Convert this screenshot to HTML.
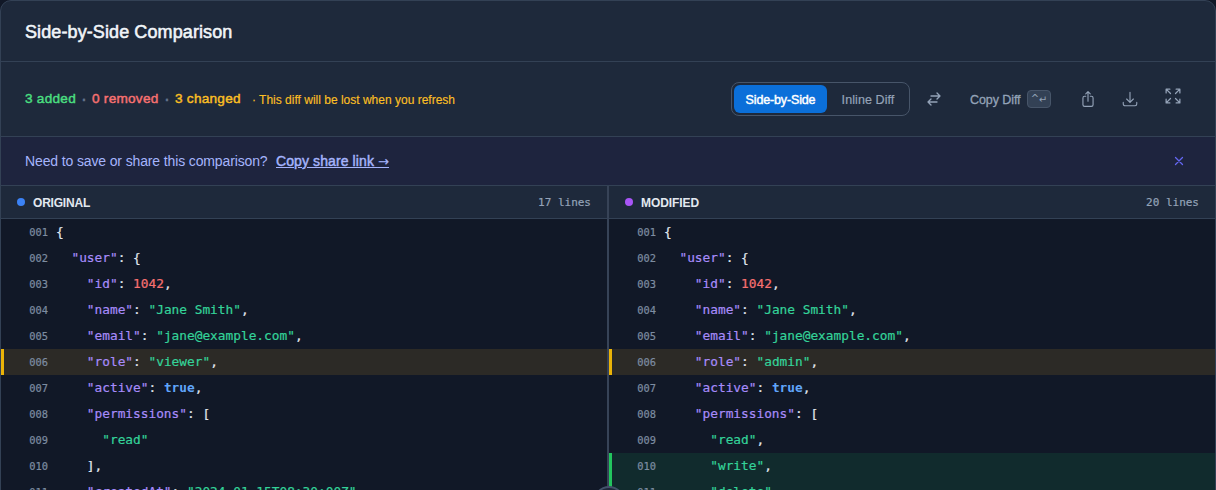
<!DOCTYPE html>
<html lang="en">
<head>
<meta charset="utf-8">
<title>Side-by-Side Comparison</title>
<style>
  * { box-sizing: border-box; margin: 0; padding: 0; }
  html, body { width: 1216px; height: 490px; overflow: hidden; background: #111827; }
  body { font-family: "Liberation Sans", sans-serif; color: #e2e8f0; -webkit-font-smoothing: antialiased; }
  .card { position: absolute; left: 0; top: 0; width: 1216px; height: 560px; background: #1e293b; border: 1px solid #334155; border-radius: 11px; overflow: hidden; }

  /* header */
  .head { position: absolute; left: 0; top: 0; width: 1214px; height: 61px; border-bottom: 1px solid #334155; }
  .head h1 { position: absolute; left: 24px; top: 19px; font-size: 18px; line-height: 24px; font-weight: 400; -webkit-text-stroke: 0.55px #f1f5f9; letter-spacing: 0.1px; color: #f1f5f9; white-space: nowrap; }

  /* toolbar */
  .bar { position: absolute; left: 0; top: 61px; width: 1214px; height: 75px; border-bottom: 1px solid #334155; }
  .stats { position: absolute; left: 24px; top: 27px; height: 20px; line-height: 20px; font-size: 13.6px; font-weight: 400; -webkit-text-stroke: 0.45px; letter-spacing: 0.26px; white-space: nowrap; }
  .stats span { position: absolute; top: 0; }
  .add { color: #4ade80; } .rem { color: #f87171; } .chg { color: #fbbf24; }
  .dot { color: #64748b; font-size: 14px; font-weight: 700; -webkit-text-stroke: 0.25px #64748b; margin-top: 1px; }
  .warn { color: #fbbf24; font-size: 12px; -webkit-text-stroke: 0.15px #fbbf24; letter-spacing: 0; margin-top: 1px; }

  .seg { position: absolute; left: 730px; top: 20px; width: 179px; height: 34px; border: 1px solid #475569; border-radius: 8px; }
  .seg .on { position: absolute; left: 2px; top: 2px; width: 93px; height: 28px; border-radius: 6px; background: #0b6fd9; color: #fff; font-size: 12.5px; font-weight: 400; -webkit-text-stroke: 0.45px #fff; letter-spacing: -0.15px; line-height: 28px; padding-top: 1px; text-align: center; }
  .seg .off { position: absolute; left: 97px; top: 2px; width: 78px; height: 28px; border-radius: 6px; color: #94a3b8; font-size: 12.5px; font-weight: 400; -webkit-text-stroke: 0.2px #94a3b8; letter-spacing: 0.08px; line-height: 28px; padding-top: 1px; text-align: center; }
  .ico { position: absolute; color: #94a3b8; }
  .ico svg { display: block; fill: none; stroke: currentColor; stroke-width: 1.5; stroke-linecap: round; stroke-linejoin: round; }
  .kbd span { position: relative; top: 1px; margin-left: -0.5px; }
  .copy { position: absolute; left: 969px; top: 28px; font-size: 12.5px; line-height: 20px; color: #94a3b8; -webkit-text-stroke: 0.3px #94a3b8; letter-spacing: -0.08px; white-space: nowrap; }
  .kbd { position: absolute; left: 1026px; top: 28px; width: 24px; height: 18px; border: 1px solid #475569; background: #334155; border-radius: 4px; color: #94a3b8; font-size: 10px; line-height: 16px; text-align: center; font-family: "DejaVu Sans", "Liberation Sans", sans-serif; }

  /* banner */
  .banner { position: absolute; left: 0; top: 136px; width: 1214px; height: 49px; background: #1e243e; border-bottom: 1px solid #334155; }
  .banner p { position: absolute; left: 24px; top: 14px; font-size: 14px; line-height: 20px; color: #a5b4fc; letter-spacing: -0.13px; white-space: nowrap; }
  .banner a { position: absolute; left: 251px; top: 0; color: #a5b4fc; font-weight: 400; -webkit-text-stroke: 0.45px #a5b4fc; letter-spacing: 0.1px; text-decoration: underline; }
  .banner .ar { font-family: "DejaVu Sans", "Liberation Sans", sans-serif; font-size: 13px; -webkit-text-stroke: 0.2px #a5b4fc; }
  .banner .x { position: absolute; left: 1171px; top: 17px; color: #6467f2; }

  /* panels */
  .pane { position: absolute; top: 185px; height: 380px; background: #111827; overflow: hidden; }
  .pane.l { left: 0; width: 606px; }
  .pane.r { left: 608px; width: 606px; }
  .split { position: absolute; left: 606px; top: 185px; width: 2px; height: 380px; background: #374357; }
  .knob { position: absolute; left: 592px; top: 485px; width: 32px; height: 32px; border-radius: 50%; background: #1e293b; border: 2px solid #43526a; }
  .ph { position: absolute; left: 0; top: 0; width: 100%; height: 33px; background: #1e293b; border-bottom: 1px solid #334155; }
  .ph i { position: absolute; left: 16px; top: 12px; width: 8px; height: 8px; border-radius: 50%; }
  .ph b { position: absolute; left: 32px; top: 7px; font-size: 12px; line-height: 20px; font-weight: 700; color: #e2e8f0; letter-spacing: -0.2px; }
  .ph em { position: absolute; right: 16px; top: 7px; font-style: normal; font-family: "DejaVu Sans Mono", "Liberation Mono", monospace; font-size: 11px; line-height: 20px; color: #94a3b8; -webkit-text-stroke: 0.2px #94a3b8; }
  .code { position: absolute; left: 0; top: 33px; width: 100%; font-family: "DejaVu Sans Mono", "Liberation Mono", monospace; font-size: 12.8px; -webkit-text-stroke: 0.2px; }
  .ln { position: relative; height: 26px; line-height: 26px; white-space: pre; border-left: 3px solid transparent; padding-left: 52px; color: #e2e8f0; }
  .ln u { position: absolute; left: 16px; top: 0; width: 28px; text-align: right; text-decoration: none; font-size: 10.4px; color: #7d8ca1; }
  .ln.c { background: #2c2a26; border-left-color: #eab308; }
  .ln.a { background: #112b2d; border-left-color: #22c55e; }
  .k { color: #a78bfa; } .s { color: #34d399; } .n { color: #f87171; } .t { color: #60a5fa; font-weight: 700; -webkit-text-stroke: 0; }
</style>
</head>
<body>
<div class="card">
  <div class="head"><h1>Side-by-Side Comparison</h1></div>

  <div class="bar">
    <div class="stats">
      <span class="add" style="left:0">3 added</span>
      <span class="dot" style="left:57px">·</span>
      <span class="rem" style="left:67px">0 removed</span>
      <span class="dot" style="left:140px">·</span>
      <span class="chg" style="left:150px">3 changed</span>
      <span class="warn" style="left:227px">· This diff will be lost when you refresh</span>
    </div>
    <div class="seg"><div class="on">Side-by-Side</div><div class="off">Inline Diff</div></div>
    <div class="ico" style="left:925px;top:29px"><svg width="16" height="16" viewBox="0 0 24 24" style="stroke-width:2"><path d="M7.5 21 3 16.5m0 0L7.5 12M3 16.5h13.5m0-13.5L21 7.5m0 0L16.5 12M21 7.5H7.5"/></svg></div>
    <div class="copy">Copy Diff</div>
    <div class="kbd">^<span>↵</span></div>
    <div class="ico" style="left:1078px;top:28px"><svg width="18" height="18" viewBox="0 0 24 24"><path d="M9 8.25H7.5a2.25 2.25 0 0 0-2.25 2.25v9a2.25 2.25 0 0 0 2.25 2.25h9a2.25 2.25 0 0 0 2.25-2.25v-9a2.25 2.25 0 0 0-2.25-2.25H15m0-3-3-3m0 0-3 3m3-3V15"/></svg></div>
    <div class="ico" style="left:1120px;top:28px"><svg width="18" height="18" viewBox="0 0 24 24"><path d="M3 16.5v2.25A2.25 2.25 0 0 0 5.25 21h13.5A2.25 2.25 0 0 0 21 18.75V16.5M16.5 12 12 16.5m0 0L7.5 12m4.500 4.500V3"/></svg></div>
    <div class="ico" style="left:1162px;top:24px"><svg width="20" height="20" viewBox="0 0 24 24"><path d="M3.750 3.750v4.500m0-4.500h4.500m-4.500 0L9 9M3.750 20.250v-4.500m0 4.500h4.500m-4.500 0L9 15M20.250 3.750h-4.500m4.500 0v4.500m0-4.500L15 9m5.250 11.250h-4.500m4.500 0v-4.500m0 4.500L15 15"/></svg></div>
  </div>

  <div class="banner">
    <p>Need to save or share this comparison? <a>Copy share link <span class="ar">→</span></a></p>
    <div class="ico x"><svg width="14" height="14" viewBox="0 0 24 24" style="stroke-width:2.2"><path d="M6 18 18 6M6 6l12 12"/></svg></div>
  </div>

  <div class="pane l">
    <div class="ph"><i style="background:#3b82f6"></i><b>ORIGINAL</b><em>17 lines</em></div>
    <div class="code">
<div class="ln"><u>001</u>{</div>
<div class="ln"><u>002</u>  <span class="k">"user"</span>: {</div>
<div class="ln"><u>003</u>    <span class="k">"id"</span>: <span class="n">1042</span>,</div>
<div class="ln"><u>004</u>    <span class="k">"name"</span>: <span class="s">"Jane Smith"</span>,</div>
<div class="ln"><u>005</u>    <span class="k">"email"</span>: <span class="s">"jane@example.com"</span>,</div>
<div class="ln c"><u>006</u>    <span class="k">"role"</span>: <span class="s">"viewer"</span>,</div>
<div class="ln"><u>007</u>    <span class="k">"active"</span>: <span class="t">true</span>,</div>
<div class="ln"><u>008</u>    <span class="k">"permissions"</span>: [</div>
<div class="ln"><u>009</u>      <span class="s">"read"</span></div>
<div class="ln"><u>010</u>    ],</div>
<div class="ln"><u>011</u>    <span class="k">"createdAt"</span>: <span class="s">"2024-01-15T08:30:00Z"</span>,</div>
<div class="ln"><u>012</u>    <span class="k">"lastLogin"</span>: <span class="s">"2024-03-01T12:00:00Z"</span></div>
    </div>
  </div>

  <div class="pane r">
    <div class="ph"><i style="background:#a855f7"></i><b style="letter-spacing:-0.08px">MODIFIED</b><em>20 lines</em></div>
    <div class="code">
<div class="ln"><u>001</u>{</div>
<div class="ln"><u>002</u>  <span class="k">"user"</span>: {</div>
<div class="ln"><u>003</u>    <span class="k">"id"</span>: <span class="n">1042</span>,</div>
<div class="ln"><u>004</u>    <span class="k">"name"</span>: <span class="s">"Jane Smith"</span>,</div>
<div class="ln"><u>005</u>    <span class="k">"email"</span>: <span class="s">"jane@example.com"</span>,</div>
<div class="ln c"><u>006</u>    <span class="k">"role"</span>: <span class="s">"admin"</span>,</div>
<div class="ln"><u>007</u>    <span class="k">"active"</span>: <span class="t">true</span>,</div>
<div class="ln"><u>008</u>    <span class="k">"permissions"</span>: [</div>
<div class="ln"><u>009</u>      <span class="s">"read"</span>,</div>
<div class="ln a"><u>010</u>      <span class="s">"write"</span>,</div>
<div class="ln a"><u>011</u>      <span class="s">"delete"</span></div>
<div class="ln"><u>012</u>    ],</div>
    </div>
  </div>

  <div class="split"></div>
  <div class="knob"></div>
</div>
</body>
</html>
